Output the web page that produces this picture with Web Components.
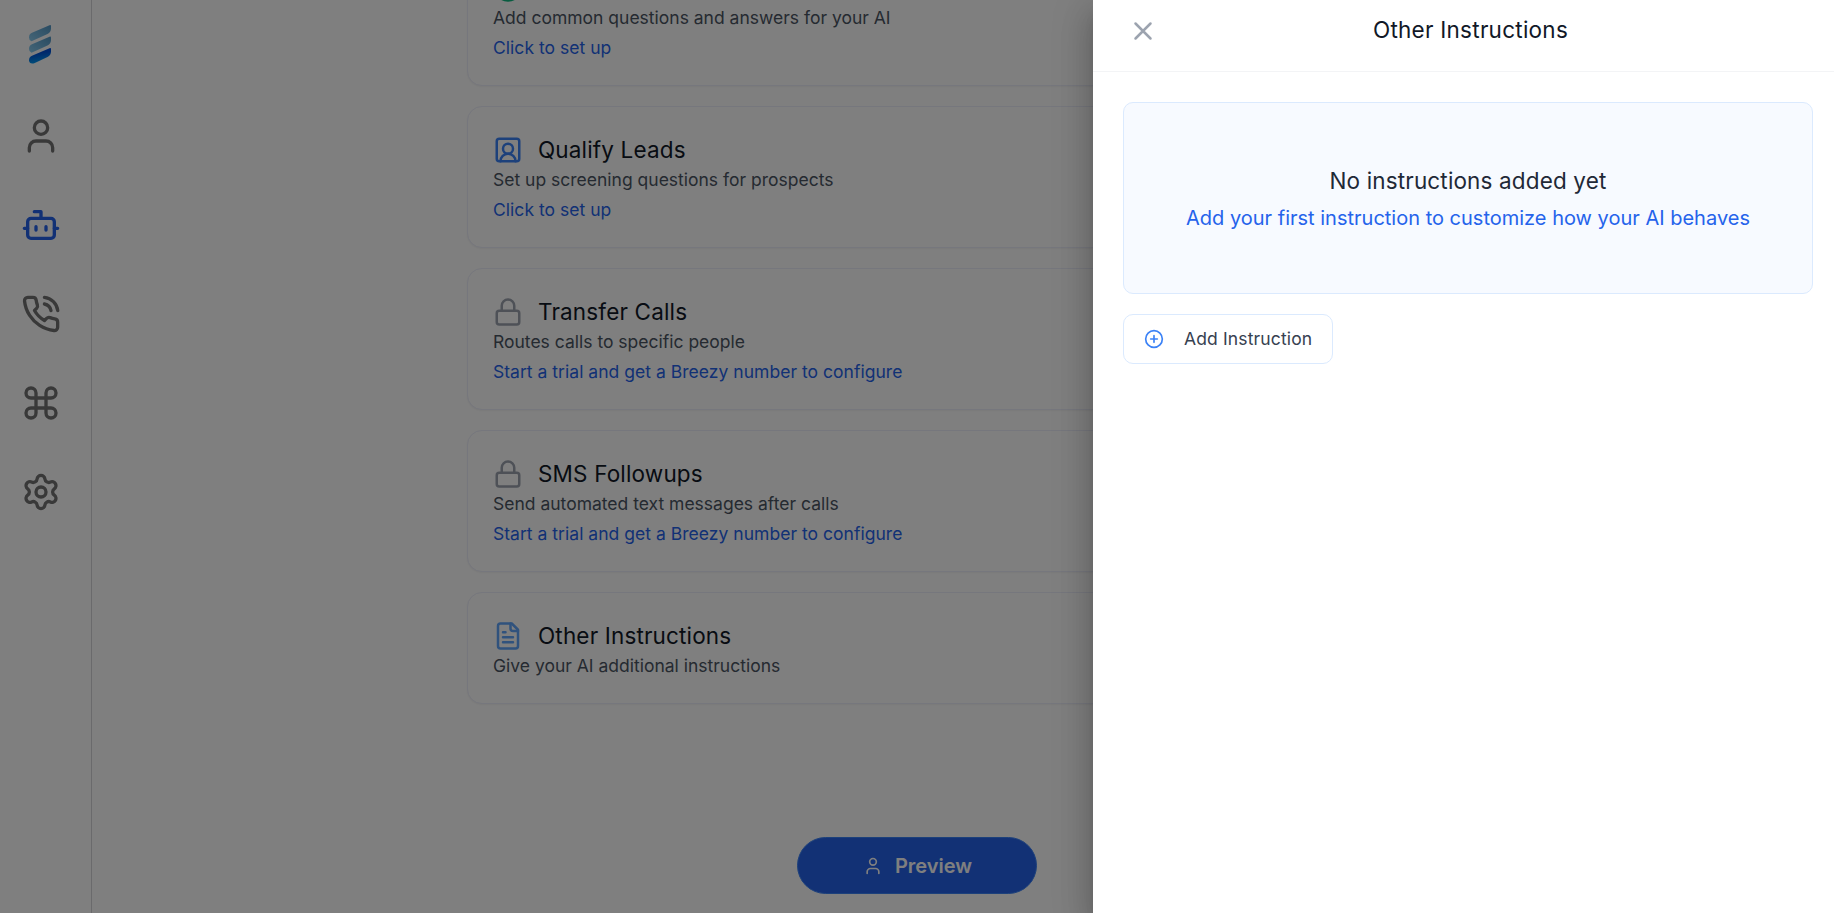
<!DOCTYPE html>
<html lang="en">
<head>
<meta charset="utf-8">
<title>Other Instructions</title>
<style>
html,body{margin:0;height:100%;overflow:hidden;background:#fff}
body{font-family:Inter,"Liberation Sans",sans-serif;color:#111827}
</style>
</head>
<body>
<breezy-app></breezy-app>
<script>
const ICONS={
user:'<path d="M19 21v-2a4 4 0 0 0-4-4H9a4 4 0 0 0-4 4v2"/><circle cx="12" cy="7" r="4"/>',
bot:'<path d="M12 8V4H8"/><rect width="16" height="12" x="4" y="8" rx="2"/><path d="M2 14h2M20 14h2M15 13v2M9 13v2"/>',
phone:'<path d="M22 16.92v3a2 2 0 0 1-2.18 2 19.79 19.79 0 0 1-8.63-3.07 19.5 19.5 0 0 1-6-6 19.79 19.79 0 0 1-3.07-8.67A2 2 0 0 1 4.11 2h3a2 2 0 0 1 2 1.72 12.84 12.84 0 0 0 .7 2.81 2 2 0 0 1-.45 2.11L8.09 9.91a16 16 0 0 0 6 6l1.27-1.27a2 2 0 0 1 2.11-.45 12.84 12.84 0 0 0 2.81.7A2 2 0 0 1 22 16.92z"/><path d="M14.05 2a9 9 0 0 1 8 7.94M14.05 6A5 5 0 0 1 18 10"/>',
command:'<path d="M15 6v12a3 3 0 1 0 3-3H6a3 3 0 1 0 3 3V6a3 3 0 1 0-3 3h12a3 3 0 1 0-3-3"/>',
gear:'<path d="M9.671 4.136a2.34 2.34 0 0 1 4.659 0 2.34 2.34 0 0 0 3.319 1.915 2.34 2.34 0 0 1 2.33 4.033 2.34 2.34 0 0 0 0 3.831 2.34 2.34 0 0 1-2.33 4.033 2.34 2.34 0 0 0-3.319 1.915 2.34 2.34 0 0 1-4.659 0 2.34 2.34 0 0 0-3.32-1.915 2.34 2.34 0 0 1-2.33-4.033 2.34 2.34 0 0 0 0-3.831A2.34 2.34 0 0 1 6.35 6.051a2.34 2.34 0 0 0 3.319-1.915"/><circle cx="12" cy="12" r="3"/>',
leads:'<path d="M18 21a6 6 0 0 0-12 0"/><circle cx="12" cy="11" r="4"/><rect width="18" height="18" x="3" y="3" rx="2"/>',
lock:'<rect width="18" height="11" x="3" y="11" rx="2"/><path d="M7 11V7a5 5 0 0 1 10 0v4"/>',
file:'<path d="M15 2H6a2 2 0 0 0-2 2v16a2 2 0 0 0 2 2h12a2 2 0 0 0 2-2V7Z"/><path d="M14 2v4a2 2 0 0 0 2 2h4M10 9H8M16 13H8M16 17H8"/>',
help:'<circle cx="12" cy="12" r="10"/><path d="M9.1 9a3 3 0 0 1 5.8 1c0 2-3 3-3 3M12 17h.01"/>',
plus:'<circle cx="12" cy="12" r="10"/><path d="M8 12h8M12 8v8"/>',
close:'<path d="M18 6 6 18M6 6l12 12"/>'
};
const define=(name,html)=>customElements.define(name,class extends HTMLElement{
  constructor(){super();this.attachShadow({mode:'open'}).innerHTML=html;}
});
customElements.define('ui-icon',class extends HTMLElement{
  connectedCallback(){
    const s=this.getAttribute('size')||24,w=this.getAttribute('stroke')||2;
    if(!this.shadowRoot)this.attachShadow({mode:'open'});
    this.shadowRoot.innerHTML=`<style>:host{display:block;flex:none;width:${s}px;height:${s}px}svg{display:block}</style>
    <svg width="${s}" height="${s}" viewBox="0 0 24 24" fill="none" stroke="currentColor" stroke-width="${w}" stroke-linecap="round" stroke-linejoin="round">${ICONS[this.getAttribute('name')]}</svg>`;
  }
});
define('brand-logo',`<style>:host{display:block;width:22px;height:39px}svg{display:block}</style>
<svg width="22" height="39" viewBox="0 0 22 39"><defs>
<linearGradient id="a" x1="0" y1="1" x2="1" y2="0"><stop offset="0" stop-color="#8ccdf0"/><stop offset="1" stop-color="#5296c4"/></linearGradient>
<linearGradient id="b" x1=".4" y1="0" x2=".6" y2="1"><stop offset=".3" stop-color="#0050d8"/><stop offset="1" stop-color="#00a0f4"/></linearGradient></defs>
<g fill="url(#a)"><path d="M0 12.500C0 10 1 8.600 3 7.700L20.500 .300Q22 -.300 22 1V3.500C22 6 20.800 7.800 18.500 8.900L2.500 16.200Q0 15.500 0 12.500Z"/><path d="M0 24C0 21.500 1 20.100 3 19.200L20.500 11.800Q22 11.200 22 12.500V15C22 17.500 20.800 19.300 18.500 20.400L2.500 27.700Q0 27 0 24Z"/></g>
<path fill="url(#b)" d="M0 35.200C0 33 1 31.600 3 30.700L20.500 23.300Q22 22.700 22 24V26.500C22 29 20.800 30.800 18.500 31.900L5.800 37.900C2.600 39.400 0 38 0 35.200Z"/></svg>`);
define('side-nav',`<style>:host{box-sizing:border-box;display:flex;flex-direction:column;width:92px;height:100%;border-right:1px solid #d4d4d8;padding:25px 0 0 21px;color:#737373}
brand-logo{margin:0 0 52px 8px}nav{display:flex;flex-direction:column;gap:49px}.on{color:#2563eb}</style>
<brand-logo></brand-logo><nav><ui-icon name="user" size="40"></ui-icon><ui-icon class="on" name="bot" size="40"></ui-icon><ui-icon name="phone" size="40"></ui-icon><ui-icon name="command" size="40"></ui-icon><ui-icon name="gear" size="40"></ui-icon></nav>`);
define('feature-card',`<style>:host{display:block;box-sizing:border-box;border:1px solid #eceefa;border-radius:15px;padding:28px 25px 22px;background:#fff;box-shadow:0 1px 2px rgba(0,0,0,.05)}
header{display:flex;align-items:center;gap:15px;height:30px;font-size:22.5px;line-height:30px;font-weight:400;letter-spacing:.16px;color:#111827}
::slotted(p){margin:0;font-size:17.5px;line-height:30px;font-weight:400;color:#4b5563}::slotted(p.link){color:#2563eb;letter-spacing:.03px}</style>
<header><slot name="icon"></slot><slot name="title"></slot></header><slot></slot>`);
define('preview-button',`<style>:host{display:block}button{display:flex;align-items:center;justify-content:center;gap:12px;width:240px;height:57px;padding:0 0 0 1px;border:1px solid #3b82f6;border-radius:29px;background:#2563eb;color:#fff;font:600 20px/28px Inter,"Liberation Sans",sans-serif}</style>
<button><ui-icon name="user" size="20"></ui-icon><slot></slot></button>`);
define('settings-page',`<style>:host{display:grid;grid-template-columns:92px 1fr;height:100%}
main{padding:0 375px;overflow:hidden}.list{display:flex;flex-direction:column;gap:20px;margin-top:-56px}</style>
<side-nav></side-nav><main><div class="list">
<feature-card><ui-icon slot="icon" name="help" size="30" style="color:#10b981"></ui-icon><p>Add common questions and answers for your AI</p><p class="link">Click to set up</p></feature-card>
<feature-card><ui-icon slot="icon" name="leads" size="30" style="color:#3b82f6"></ui-icon><span slot="title">Qualify Leads</span><p>Set up screening questions for prospects</p><p class="link">Click to set up</p></feature-card>
<feature-card><ui-icon slot="icon" name="lock" size="30" style="color:#9ca3af"></ui-icon><span slot="title">Transfer Calls</span><p>Routes calls to specific people</p><p class="link">Start a trial and get a Breezy number to configure</p></feature-card>
<feature-card><ui-icon slot="icon" name="lock" size="30" style="color:#9ca3af"></ui-icon><span slot="title">SMS Followups</span><p>Send automated text messages after calls</p><p class="link">Start a trial and get a Breezy number to configure</p></feature-card>
<feature-card><ui-icon slot="icon" name="file" size="30" style="color:#60a5fa"></ui-icon><span slot="title">Other Instructions</span><p>Give your AI additional instructions</p></feature-card>
</div></main>`);
define('empty-state',`<style>:host{box-sizing:border-box;display:flex;flex-direction:column;align-items:center;justify-content:center;height:192px;border:1px solid #dbeafe;border-radius:10px;background:#f7faff}
h3{margin:0 0 4px;font-size:22.5px;line-height:35px;font-weight:400;letter-spacing:.15px;color:#1f2937}p{margin:0;font-size:20px;line-height:32px;font-weight:400;color:#2563eb}</style>
<h3><slot name="title"></slot></h3><p><slot></slot></p>`);
define('outline-button',`<style>:host{display:block;width:max-content}button{box-sizing:border-box;display:flex;align-items:center;gap:20px;height:50px;padding:0 20px;border:1px solid #dbeafe;border-radius:10px;background:#fff;color:#374151;font:400 17.5px/25px Inter,"Liberation Sans",sans-serif;letter-spacing:.14px}ui-icon{color:#3b82f6}span{padding-bottom:2px}</style>
<button><ui-icon name="plus" size="20"></ui-icon><span><slot></slot></span></button>`);
define('side-drawer',`<style>:host{display:flex;flex-direction:column;background:#fff;box-shadow:0 10px 12px -6px rgba(0,0,0,.2),0 20px 30px 3px rgba(0,0,0,.14),0 8px 38px 6px rgba(0,0,0,.12)}
header{box-sizing:border-box;display:grid;grid-template-columns:30px 1fr;align-items:center;height:72px;padding:0 0 9px 35px;border-bottom:1px solid #f3f4f6}
h2{margin:-1px 51px 1px 0;text-align:center;font-size:22.5px;line-height:36px;font-weight:400;letter-spacing:.26px;color:#111827}ui-icon{color:#9ca3af}
section{display:flex;flex-direction:column;gap:20px;padding:30px 21px 0 30px}</style>
<header><ui-icon name="close" size="30"></ui-icon><h2><slot name="title"></slot></h2></header><section><slot></slot></section>`);
define('breezy-app',`<style>:host{display:block;position:relative;height:100vh;overflow:hidden}
preview-button{position:absolute;left:797px;top:837px}.shade{position:absolute;inset:0;background:rgba(0,0,0,.5)}
side-drawer{position:absolute;top:0;right:0;bottom:0;width:741px}</style>
<settings-page></settings-page><preview-button>Preview</preview-button><div class="shade"></div>
<side-drawer><span slot="title">Other Instructions</span>
<empty-state><span slot="title">No instructions added yet</span>Add your first instruction to customize how your AI behaves</empty-state>
<outline-button>Add Instruction</outline-button></side-drawer>`);
</script>
</body>
</html>
